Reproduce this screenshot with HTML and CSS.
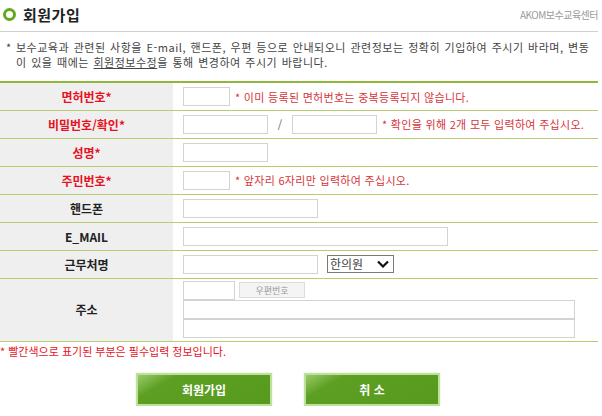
FILE: index.html
```html
<!DOCTYPE html>
<html lang="ko">
<head>
<meta charset="utf-8">
<title>회원가입</title>
<link rel="stylesheet" href="styles.css">
</head>
<body>
<div class="page">
  <div class="head">
    <h1 class="title"><span class="ring"></span>회원가입</h1>
    <span class="brand">AKOM보수교육센터</span>
  </div>
  <div class="notice">
    <span class="star">*</span>
    <p>보수교육과 관련된 사항을 E-mail, 핸드폰, 우편 등으로 안내되오니 관련정보는 정확히 기입하여 주시기 바라며, 변동<br>이 있을 때에는 <u>회원정보수정</u>을 통해 변경하여 주시기 바랍니다.</p>
  </div>
  <table class="form">
    <tr>
      <th class="req">면허번호*</th>
      <td><input class="w47" type="text"><span class="note">* 이미 등록된 면허번호는 중복등록되지 않습니다.</span></td>
    </tr>
    <tr>
      <th class="req">비밀번호/확인*</th>
      <td><input class="w85" type="password"><span class="slash">/</span><input class="w85" type="password"><span class="note">* 확인을 위해 2개 모두 입력하여 주십시오.</span></td>
    </tr>
    <tr>
      <th class="req">성명*</th>
      <td><input class="w85" type="text"></td>
    </tr>
    <tr>
      <th class="req">주민번호*</th>
      <td><input class="w47" type="text"><span class="note">* 앞자리 6자리만 입력하여 주십시오.</span></td>
    </tr>
    <tr>
      <th>핸드폰</th>
      <td><input class="w135" type="text"></td>
    </tr>
    <tr>
      <th>E_MAIL</th>
      <td><input class="w265" type="text"></td>
    </tr>
    <tr>
      <th>근무처명</th>
      <td><input class="w135" type="text"><span class="select">한의원<svg width="12" height="8" viewBox="0 0 12 8"><path d="M1 1.5 L6 6.5 L11 1.5" fill="none" stroke="#111" stroke-width="2.2"/></svg></span></td>
    </tr>
    <tr class="addr">
      <th>주소</th>
      <td>
        <div class="zip"><input class="w52" type="text"><button class="zipbtn" type="button">우편번호</button></div>
        <input class="line" type="text">
        <input class="line" type="text">
      </td>
    </tr>
  </table>
  <p class="foot">* 빨간색으로 표기된 부분은 필수입력 정보입니다.</p>
  <div class="btns">
    <button class="gbtn" type="button">회원가입</button>
    <button class="gbtn" type="button">취 소</button>
  </div>
</div>
</body>
</html>
```
FILE: styles.css
```css
* { box-sizing: border-box; }
body {
  margin: 0;
  background: #fff;
  font-family: "Noto Sans CJK KR", "Noto Sans", sans-serif;
  color: #333;
}
.page { width: 598px; }
.head {
  height: 32px;
  display: flex;
  align-items: center;
  justify-content: space-between;
  border-bottom: 1px solid #cfcfcf;
  padding-bottom: 2px;
}
.title {
  margin: 0;
  display: flex;
  align-items: center;
  font-size: 15px;
  font-weight: 700;
  color: #222;
  letter-spacing: 0.5px;
}
.ring {
  width: 13px;
  height: 13px;
  border: 3px solid #64a81c;
  border-radius: 50%;
  margin: 0 7px 0 3px;
}
.brand {
  font-size: 10px;
  color: #9a9a9a;
  letter-spacing: -0.5px;
}
.notice {
  display: flex;
  padding: 8px 0 11px 6px;
  font-size: 11px;
  line-height: 15px;
  color: #444;
}
.notice .star { width: 10px; flex: none; }
.notice p { margin: 0; white-space: nowrap; letter-spacing: 0.5px; word-spacing: 1px; }
.form {
  width: 598px;
  border-collapse: collapse;
  border-top: 2px solid #8fb83a;
}
.form th, .form td {
  height: 28px;
  border-bottom: 1px solid #b9cc72;
  padding: 0;
}
.form th {
  width: 173px;
  background: #efefef;
  font-size: 12px;
  font-weight: 700;
  color: #222;
  text-align: center;
}
.form th.req { color: #e8121f; }
.form td {
  padding-left: 10px;
  font-size: 11px;
  white-space: nowrap;
}
input {
  height: 19px;
  border: 1px solid #d3d3d3;
  background: #fff;
  vertical-align: middle;
  padding: 0;
  margin: 0;
}
.w47 { width: 47px; }
.w52 { width: 52px; }
.w85 { width: 85px; }
.w135 { width: 135px; }
.w265 { width: 265px; }
.note {
  color: #d6343a;
  margin-left: 5px;
  vertical-align: middle;
  letter-spacing: 0.3px;
}
.slash {
  display: inline-block;
  width: 24px;
  text-align: center;
  color: #666;
  vertical-align: middle;
}
.select {
  display: inline-flex;
  align-items: center;
  justify-content: space-between;
  width: 67px;
  height: 18px;
  border: 1px solid #7a7a7a;
  margin-left: 9px;
  padding: 0 4px 0 2px;
  font-family: "Liberation Serif", "Noto Sans CJK KR", serif;
  font-size: 12px;
  color: #444;
  vertical-align: middle;
}
.addr th, .addr td { height: 63px; }
.addr td { padding-top: 2px; vertical-align: top; }
.zip { display: flex; align-items: center; height: 19px; }
.zipbtn {
  width: 66px;
  height: 16px;
  margin-left: 4px;
  border: 1px solid #dcdcdc;
  background: #f4f4f4;
  color: #999;
  font-family: "Noto Sans CJK KR", sans-serif;
  font-size: 9px;
  padding: 0;
}
.line { display: block; width: 392px; }
.foot {
  margin: 2px 0 0;
  font-size: 11px;
  line-height: 15px;
  color: #e8121f;
}
.btns {
  display: flex;
  gap: 32px;
  margin-top: 14px;
  padding-left: 136px;
}
.gbtn {
  width: 136px;
  height: 33px;
  border: 2px solid #bfe09c;
  background: linear-gradient(150deg, #9acb6a 0%, #5d9f22 22%, #589a1e 100%);
  color: #fff;
  font-family: "Noto Sans CJK KR", sans-serif;
  font-size: 12px;
  font-weight: 700;
  padding: 0;
  box-shadow: 0 0 2px #d7edc1;
}
```
